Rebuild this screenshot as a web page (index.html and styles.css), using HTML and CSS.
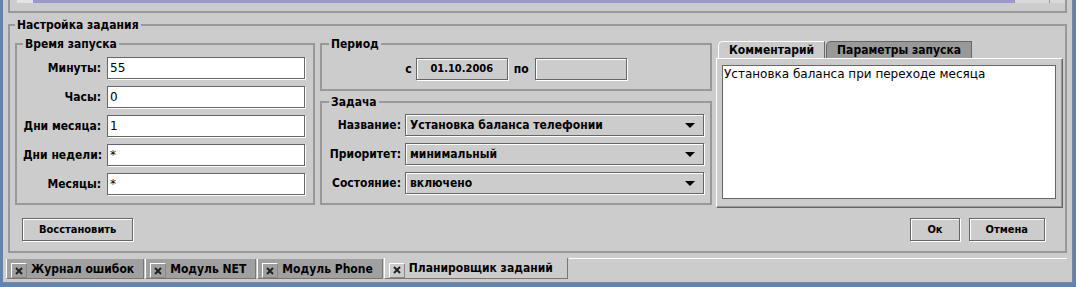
FILE: index.html
```html
<html>
<head>
<meta charset="utf-8">
<link rel="stylesheet" href="styles.css">
</head>
<body>
<div class="frame">
  <div class="pane">
    <div class="toplist">
      <div class="toprow">
        <span class="cell-gap"></span><span class="cell-first"></span><span class="cell-sel"></span><span class="cell-a"></span><span class="cell-b"></span>
      </div>
    </div>

    <fieldset class="group group-main">
      <legend>Настройка задания</legend>
      <div class="main-row">
        <fieldset class="group group-time">
          <legend>Время запуска</legend>
          <div class="form-grid time-grid">
            <label>Минуты:</label><input class="field" type="text" value="55">
            <label>Часы:</label><input class="field" type="text" value="0">
            <label>Дни месяца:</label><input class="field" type="text" value="1">
            <label>Дни недели:</label><input class="field" type="text" value="*">
            <label>Месяцы:</label><input class="field" type="text" value="*">
          </div>
        </fieldset>

        <div class="mid-col">
          <fieldset class="group group-period">
            <legend>Период</legend>
            <div class="period-row">
              <span class="lbl">с</span>
              <span class="date-field">01.10.2006</span>
              <span class="lbl">по</span>
              <span class="date-field"></span>
            </div>
          </fieldset>
          <fieldset class="group group-task">
            <legend>Задача</legend>
            <div class="form-grid task-grid">
              <label>Название:</label>
              <div class="combo"><span>Установка баланса телефонии</span><i class="arrow"></i></div>
              <label>Приоритет:</label>
              <div class="combo"><span>минимальный</span><i class="arrow"></i></div>
              <label>Состояние:</label>
              <div class="combo"><span>включено</span><i class="arrow"></i></div>
            </div>
          </fieldset>
        </div>

        <div class="tabpane">
          <div class="tabs">
            <span class="tab active">Комментарий</span>
            <span class="tab">Параметры запуска</span>
          </div>
          <div class="tab-body">
            <div class="textarea">Установка баланса при переходе месяца</div>
          </div>
        </div>
      </div>

      <div class="buttons">
        <button type="button" class="btn btn-restore">Восстановить</button>
        <span class="spacer"></span>
        <button type="button" class="btn btn-ok">Ок</button>
        <button type="button" class="btn btn-cancel">Отмена</button>
      </div>
    </fieldset>

    <div class="doc-tabs">
      <span class="doc-tab"><span class="close"><svg width="10" height="10" viewBox="0 0 10 10"><path d="M2 2L8 8M8 2L2 8" stroke="#222" stroke-width="2"/></svg></span>Журнал ошибок</span>
      <span class="doc-tab"><span class="close"><svg width="10" height="10" viewBox="0 0 10 10"><path d="M2 2L8 8M8 2L2 8" stroke="#222" stroke-width="2"/></svg></span>Модуль NET</span>
      <span class="doc-tab"><span class="close"><svg width="10" height="10" viewBox="0 0 10 10"><path d="M2 2L8 8M8 2L2 8" stroke="#222" stroke-width="2"/></svg></span>Модуль Phone</span>
      <span class="doc-tab active"><span class="close"><svg width="10" height="10" viewBox="0 0 10 10"><path d="M2 2L8 8M8 2L2 8" stroke="#222" stroke-width="2"/></svg></span>Планировщик заданий</span>
      <span class="doc-fill"></span>
    </div>
  </div>
</div>
</body>
</html>
```

FILE: styles.css
```css
* {
    box-sizing: border-box;
}

html, body {
    margin: 0;
    height: 100%;
}

body {
    background-color: #5f84b4;
    font-family: "DejaVu Sans", sans-serif;
    font-size: 12px;
    color: #000;
    overflow: hidden;
}

.frame {
    height: 287px;
    padding: 0 3px 4px 3px;
}

.pane {
    height: 100%;
    background-color: #cccccc;
    padding: 0 5px 0 5px;
    border-right: 1px solid #7c8797;
    border-bottom: 1px solid #7c8797;
    display: flex;
    flex-direction: column;
}

/* table clipped at the top */
.toplist {
    height: 13px;
    border: 2px solid #999;
    border-top: none;
    flex-shrink: 0;
}

.toprow {
    display: flex;
    height: 3px;
}

.cell-gap { width: 7px; }
.cell-first { width: 16px; background-color: #e4e4e4; }
.cell-sel { flex: 1; background-color: #9999cc; }
.cell-a { width: 35px; background-color: #d8d8d8; border-left: 1px solid #999; }
.cell-b { width: 16px; background-color: #d8d8d8; border-left: 1px solid #999; }

/* bold captions use the narrow face */
.group legend,
.form-grid label,
.combo,
.period-row,
.tab,
.btn,
.doc-tab {
    font-weight: bold;
    font-stretch: condensed;
}

/* group boxes */
.group {
    margin: 0;
    border: 2px solid #999;
    min-width: 0;
}

.group legend {
    font-size: 12px;
    line-height: 14px;
    padding: 0 2px;
}

.group-main {
    margin-top: 5px;
    padding: 5px 2px 10px 5px;
    flex-shrink: 0;
}

.main-row {
    display: flex;
    align-items: flex-start;
}

.group-time {
    width: 300px;
    padding: 6px 8px 7px 6px;
}

.mid-col {
    width: 392px;
    margin-left: 5px;
}

.group-period {
    padding: 6px 7px 9px 7px;
}

.group-task {
    margin-top: 4px;
    padding: 5px 6px 8px 7px;
}

.form-grid {
    display: grid;
    grid-auto-rows: 23px;
    row-gap: 6px;
    align-items: start;
}

.time-grid {
    grid-template-columns: 78px 1fr;
    column-gap: 6px;
}

.task-grid {
    grid-template-columns: 72px 1fr;
    column-gap: 4px;
}

.form-grid label {
    text-align: right;
    white-space: nowrap;
    line-height: 22px;
}

/* metal-like controls: dark frame with white highlight */
.field,
.combo,
.date-field,
.btn {
    border: 1px solid #666;
    box-shadow: inset 1px 1px 0 #fff, 1px 1px 0 #fff;
}

.field {
    height: 22px;
    width: 100%;
    margin: 0;
    padding: 0 2px;
    background-color: #fff;
    font-family: "DejaVu Sans", sans-serif;
    font-size: 12px;
    color: #000;
    outline: none;
}

.combo {
    height: 22px;
    display: flex;
    align-items: center;
    justify-content: space-between;
    padding: 0 8px 0 4px;
    background-color: #ccc;
}

.arrow {
    width: 0;
    height: 0;
    border-left: 5px solid transparent;
    border-right: 5px solid transparent;
    border-top: 5px solid #000;
}

.period-row {
    display: flex;
    justify-content: center;
    align-items: center;
    height: 23px;
}

.period-row .lbl {
    margin: 0 6px;
}

.period-row .lbl:first-child {
    margin-left: 0;
    margin-right: 4px;
}

.date-field {
    width: 92px;
    height: 22px;
    font-size: 11px;
    line-height: 20px;
    text-align: center;
    background-color: #ccc;
}

/* tabbed comment pane */
.tabpane {
    flex: 1;
    margin-left: 4px;
    margin-top: 4px;
    display: flex;
    flex-direction: column;
}

.tabs {
    display: flex;
    height: 17px;
    padding-left: 2px;
}

.tab {
    padding: 0 10px 0 10px;
    line-height: 16px;
    background-color: #999;
    border: 1px solid #666;
    border-bottom: none;
    border-top-left-radius: 5px 5px;
    margin-right: 1px;
}

.tab.active {
    background-color: #ccc;
    border-color: #fff #666 #ccc #fff;
    position: relative;
    z-index: 1;
}

.tab-body {
    height: 150px;
    border: 1px solid #666;
    border-top-color: #fff;
    border-left-color: #fff;
    box-shadow: inset -1px -1px 0 #999;
    padding: 6px 6px 8px 5px;
}

.textarea {
    height: 100%;
    background-color: #fff;
    border: 1px solid #666;
    padding: 1px 0 0 1px;
    white-space: nowrap;
}

/* buttons */
.buttons {
    display: flex;
    margin-top: 10px;
    padding: 0 18px 0 7px;
}

.spacer {
    flex: 1;
}

.btn {
    height: 23px;
    margin: 0;
    padding: 0 16px;
    background-color: #ccc;
    font-family: "DejaVu Sans", sans-serif;
    font-size: 11px;
    color: #000;
}

.btn-ok {
    margin-right: 9px;
}

/* document tabs at the bottom */
.doc-tabs {
    display: flex;
    margin-top: 5px;
    margin-left: -2px;
    height: 21px;
}

.doc-tab {
    display: flex;
    align-items: center;
    background-color: #a0a0a0;
    border-left: 1px solid #fff;
    border-right: 1px solid #777;
    border-bottom: 1px solid #777;
    padding: 0 9px 0 4px;
    margin-right: 1px;
    margin-top: 1px;
}

.doc-tab.active {
    background-color: #ccc;
    margin-top: 0;
    padding-right: 14px;
}

.close {
    width: 16px;
    height: 15px;
    margin-right: 4px;
    margin-top: 4px;
    display: flex;
    align-items: center;
    justify-content: center;
    border-top: 1px solid #fff;
    border-left: 1px solid #fff;
    border-right: 1px solid #888;
    border-bottom: 1px solid #888;
}

.doc-fill {
    flex: 1;
    border-top: 1px solid #fff;
}
```
